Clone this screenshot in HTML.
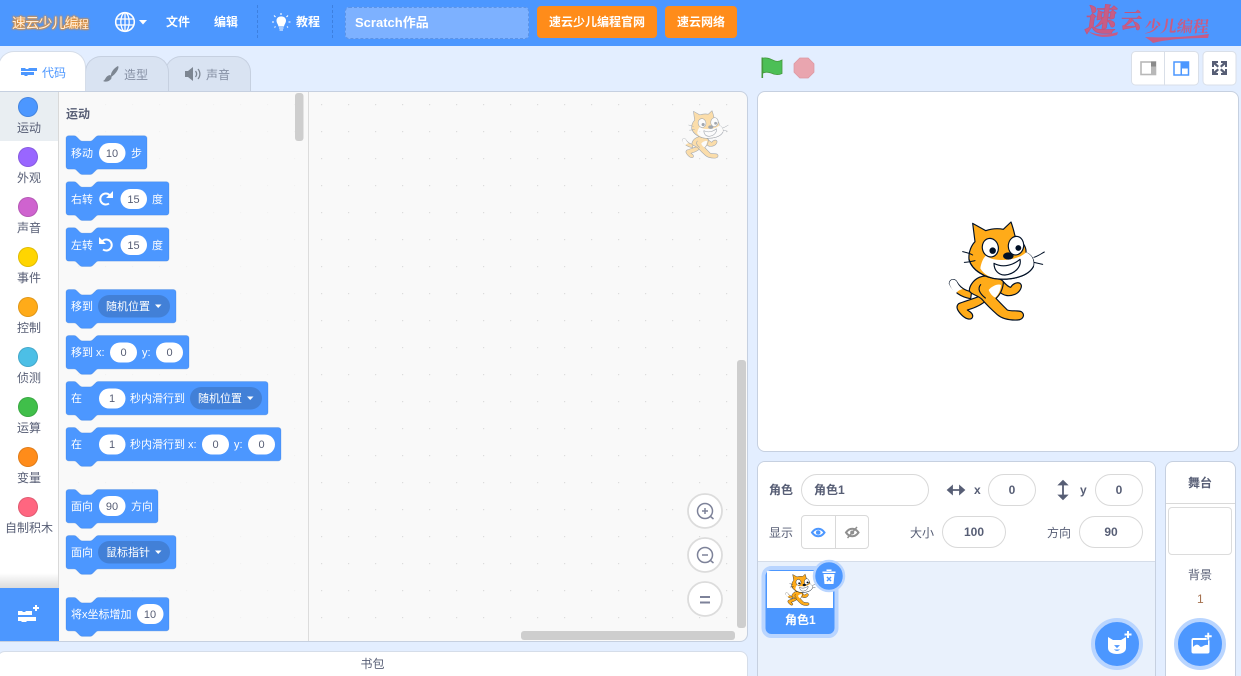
<!DOCTYPE html>
<html lang="zh"><head><meta charset="utf-8"><title>Scratch</title>
<style>
html,body{margin:0;padding:0;width:1241px;height:676px;overflow:hidden;background:#e3eeff;font-family:"Liberation Sans","Noto Sans CJK SC",sans-serif;}
#root{position:relative;width:1241px;height:676px;overflow:hidden}
.a{position:absolute;box-sizing:border-box}
.t{position:absolute;white-space:nowrap;line-height:16px}
.w{color:#fff;font-weight:700;font-size:12px}
.g{color:#575e75;font-size:12px}
.inp{position:absolute;box-sizing:border-box;background:#fff;border:1px solid #d9d9d9;border-radius:16px;color:#575e75;font-size:12px;font-weight:700;text-align:center;line-height:30px}
.cat{position:absolute;left:0;width:58px;text-align:center;font-size:12px;color:#575e75;line-height:16px}
.cat i{position:absolute;left:18px;top:-23px;width:20px;height:20px;border-radius:50%;box-sizing:border-box;border:1px solid rgba(0,0,0,.12)}
svg{position:absolute;overflow:visible}
text{font-family:"Liberation Sans","Noto Sans CJK SC",sans-serif}
</style></head><body><div id="root">
<svg width="0" height="0" style="left:0;top:0"><defs>
<symbol id="cat" viewBox="0 0 450 420">
<g stroke="#001026" stroke-width="3.5" stroke-linejoin="round" stroke-linecap="round">
<path d="M152 296C125 292 100 277 88 250C90 238 103 235 110 245C120 262 135 272 155 275Z" fill="#ffab19"/>
<path d="M88 250C90 238 103 235 110 245C115 255 120 262 128 267C118 270 112 274 108 280C98 272 92 262 88 250Z" fill="#fff" stroke="none"/>
<path d="M245 240C255 250 262 260 272 262C278 252 290 245 300 250C310 258 300 276 285 283C268 290 250 288 238 275Z" fill="#ffab19"/>
<path d="M175 290C155 298 130 305 116 311C106 320 112 332 126 346C138 358 155 362 158 350C160 340 148 334 142 330C160 325 185 315 200 300Z" fill="#ffab19"/>
<path d="M178 232C160 240 148 258 148 272C152 284 172 284 186 298C198 312 214 328 232 344C246 356 268 361 292 360C310 359 316 344 304 335C292 330 275 335 262 330C250 318 238 306 228 295C240 285 250 265 250 245C240 232 200 222 178 232Z" fill="#ffab19"/>
<path d="M206 270C215 258 235 250 243 255C242 270 235 285 226 293C218 290 210 280 206 270Z" fill="#fff" stroke="none"/>
<path d="M182 254C172 266 178 280 196 294" fill="none"/>
<path d="M158 70L197 92C215 86 235 85 250 88L273 66C278 80 282 95 285 108C305 120 320 140 318 158C335 165 345 180 340 200C325 228 280 240 235 237C195 235 155 210 147 178C145 155 155 135 165 125Z" fill="#ffab19"/>
<path d="M318 157C338 165 345 185 338 203C322 228 280 238 235 236C210 234 190 222 181 205C183 190 190 172 200 165C205 175 220 180 245 180C280 180 305 170 318 157Z" fill="#fff" stroke="none"/>
<path d="M340 200C325 228 280 240 235 237C195 235 155 210 147 178" fill="none"/>
<ellipse cx="211" cy="143" rx="24" ry="28" fill="#fff" transform="rotate(-12 211 143)"/>
<ellipse cx="288" cy="137" rx="23" ry="28" fill="#fff" transform="rotate(8 288 137)"/>
<circle cx="218" cy="152" r="8" fill="#001026"/><circle cx="295" cy="144" r="7" fill="#001026"/>
<ellipse cx="265" cy="168" rx="14" ry="9" fill="#001026"/>
<path d="M222 190C250 205 280 195 300 178C305 200 285 222 255 225C235 226 222 210 222 190Z" fill="#fff"/>
<path d="M128 155C140 158 150 160 158 165M133 187C145 187 155 184 165 182M342 172C355 168 365 160 373 156M342 187L368 193" fill="none" stroke-width="3"/>
</g></symbol>
<pattern id="dots" x="309" y="91" width="27" height="27" patternUnits="userSpaceOnUse"><rect x="12" y="13" width="1.2" height="1.2" fill="#dcdcdc"/></pattern>
<pattern id="dots2" x="309" y="91" width="27" height="27" patternUnits="userSpaceOnUse"><rect x="12" y="13" width="1.2" height="1.2" fill="#f2f2f2"/></pattern>
</defs></svg>

<!-- header -->
<div class="a" style="left:0;top:0;width:1241px;height:46px;background:#4c97ff"></div>
<div class="t" style="left:12px;top:14px;font-size:14px;line-height:18px;font-weight:400;color:#ffeeda;letter-spacing:-.8px;text-shadow:0 0 2px #ee8f25,0 0 2px #ee8f25,0 0 2px #ee8f25,0 0 1px #ee8f25">速云少儿编<span style="font-size:11px">程</span></div>
<svg style="left:0;top:0" width="400" height="46" fill="none" stroke="#fff">
<circle cx="125" cy="22" r="9.3" stroke-width="1.6"/><ellipse cx="125" cy="22" rx="4.2" ry="9.3" stroke-width="1.3"/><path d="M125 12.7V31.3M116 19H134M116 25H134" stroke-width="1.3"/>
<path d="M139 20H147L143 24.5Z" fill="#fff" stroke="none"/>
<path d="M257.500 5V39M332.500 5V39" stroke="#3d80e0" stroke-dasharray="3 2"/>
<path d="M276.500 20.500C276.500 15 286 15 286 20.500C286 23 284.500 24 284 26.500H278.500C278 24 276.500 23 276.500 20.500Z" fill="#fff" stroke="none"/>
<path d="M279 28H283.500M279.500 30H283M281 13V15M274 15.500L275.500 17M288 15.500L286.500 17M272 22H274M288.500 22H290.500M274.500 27.500L275.500 26.500M288 27.500L287 26.500" stroke-width="1.100"/>
</svg>
<div class="t w" style="left:166px;top:14px">文件</div>
<div class="t w" style="left:214px;top:14px">编辑</div>
<div class="t w" style="left:296px;top:14px">教程</div>
<div class="a" style="left:345px;top:7px;width:184px;height:32px;background:#7db1ff;border:1px dashed #5c93e6;border-radius:4px"></div>
<div class="t" style="left:355px;top:15px;color:#fff;font-weight:700;font-size:13px">Scratch作品</div>
<div class="a w" style="left:537px;top:6px;width:120px;height:32px;background:#ff8c1a;border-radius:4px;text-align:center;line-height:32px">速云少儿编程官网</div>
<div class="a w" style="left:665px;top:6px;width:72px;height:32px;background:#ff8c1a;border-radius:4px;text-align:center;line-height:32px">速云网络</div>
<div class="t" style="left:1086px;top:0;font:900 31px/36px 'Noto Serif CJK SC',serif;color:#c85c85;transform:skewX(-8deg);-webkit-text-stroke:.7px #c0557f">速</div>
<div class="t" style="left:1121px;top:5px;font:900 21px/30px 'Noto Serif CJK SC',serif;color:#c85c85;transform:skewX(-8deg);-webkit-text-stroke:.5px #c0557f">云</div>
<div class="t" style="left:1145px;top:16px;font:700 16px/20px 'Noto Serif CJK SC',serif;color:#c85c85;transform:skewX(-8deg)">少儿编程</div>
<svg style="left:0;top:0" width="1241" height="46"><path d="M1088 31C1098 36 1108 35 1118 32L1117 35C1107 38 1096 38 1088 31ZM1145 37C1165 38 1190 37 1209 34L1208 38C1190 38 1168 39 1153 43C1151 41 1148 39 1145 37Z" fill="#c85c85"/></svg>

<!-- tabs -->
<div class="a" style="left:165px;top:56px;width:86px;height:36px;background:#d9e3f2;border:1px solid #c6d0e0;border-bottom:0;border-radius:16px 16px 0 0"></div>
<div class="a" style="left:85px;top:56px;width:84px;height:36px;background:#d9e3f2;border:1px solid #c6d0e0;border-bottom:0;border-radius:16px 16px 0 0"></div>
<div class="a" style="left:-2px;top:51px;width:88px;height:41px;background:#fff;border:1px solid #d5dde9;border-bottom:0;border-radius:16px 16px 0 0"></div>
<svg style="left:0;top:0" width="260" height="92">
<path d="M21 68H25L26 69H28L29 68H37V71H21ZM21 72H34V75H28L27 76H25L24 75H21Z" fill="#4c97ff"/>
<path d="M118 66C120 68 115 75 111 77C110 73 114 68 118 66ZM110 75C112 76 112 79 110 80C108 82 105 82 103 81C106 80 105 76 110 75Z" fill="#7d8692"/>
<path d="M185 71H188L193 67V81L188 77H185Z" fill="#7d8692"/><path d="M195.500 71C197 73 197 75 195.500 77M198 69C200.500 72 200.500 76 198 79" stroke="#7d8692" stroke-width="1.300" fill="none"/>
</svg>
<div class="t" style="left:42px;top:65px;font-size:12px;color:#4c97ff">代码</div>
<div class="t" style="left:124px;top:67px;font-size:12px;color:#858fa3">造型</div>
<div class="t" style="left:206px;top:67px;font-size:12px;color:#858fa3">声音</div>

<!-- main panel -->
<div class="a" style="left:-3px;top:91px;width:751px;height:551px;background:#f9f9f9;border:1px solid #c6d0e0;border-radius:0 8px 8px 0;overflow:hidden">
<div class="a" style="left:2px;top:0;width:59px;height:496px;background:linear-gradient(#fff 0,#fff 481px,#dcdcdc 496px);border-right:1.500px solid #d9d9d9"></div>
<div class="a" style="left:2px;top:0;width:57.500px;height:49px;background:#e9eef2"></div>
<div class="a" style="left:2px;top:496px;width:59px;height:54px;background:#4c97ff"></div>
<div class="a" style="left:310px;top:0;width:1px;height:550px;background:#dcdcdc"></div>
</div>
<svg style="left:0;top:0" width="748" height="642">
<rect x="59.500" y="92" width="248" height="548" fill="url(#dots2)"/>
<rect x="310" y="92" width="437" height="548" rx="8" fill="url(#dots)"/>
<rect x="295" y="93" width="8.500" height="48" rx="3" fill="#cecece"/>
<rect x="737" y="360" width="9" height="268" rx="3" fill="#cecece"/>
<rect x="521" y="631" width="214" height="9" rx="3" fill="#cecece"/>
<g fill="#fff" stroke="#dcdcdc" stroke-width="1.800"><circle cx="705" cy="511" r="17"/><circle cx="705" cy="555" r="17"/><circle cx="705" cy="599" r="17"/></g>
<g fill="none" stroke="#7d8299" stroke-width="1.500"><circle cx="705" cy="511" r="7.500"/><path d="M710.500 516.500L713.500 519M702 511H708M705 508V514"/><circle cx="705" cy="555" r="7.500"/><path d="M710.500 560.500L713.500 563M702 555H708"/></g>
<path d="M700 596H710V598H700ZM700 601.500H710V603.500H700Z" fill="#7d8299"/>
<path d="M18 611H22L23 612H25L26 611H32V615H18ZM18 617H36V621H27L26 622H22L21 621H18Z" fill="#fff"/>
<path d="M35 605H37V607H39V609H37V611H35V609H33V607H35Z" fill="#fff"/>
</svg>
<svg style="left:668px;top:99.500px" width="72.600" height="67.800" opacity=".35"><use href="#cat" width="72.600" height="67.800"/></svg>

<div class="cat" style="top:120px"><i style="background:#4c97ff"></i>运动</div>
<div class="cat" style="top:170px"><i style="background:#9966ff"></i>外观</div>
<div class="cat" style="top:220px"><i style="background:#cf63cf"></i>声音</div>
<div class="cat" style="top:270px"><i style="background:#ffd500"></i>事件</div>
<div class="cat" style="top:320px"><i style="background:#ffab19"></i>控制</div>
<div class="cat" style="top:370px"><i style="background:#4cbfe6"></i>侦测</div>
<div class="cat" style="top:420px"><i style="background:#40bf4a"></i>运算</div>
<div class="cat" style="top:470px"><i style="background:#ff8c1a"></i>变量</div>
<div class="cat" style="top:520px"><i style="background:#ff6680"></i>自制积木</div>
<div class="t" style="left:66px;top:106px;font-size:12px;font-weight:700;color:#575e75">运动</div>

<!-- blocks -->
<svg style="left:0;top:0" width="300" height="642">
<g fill="#4c97ff" stroke="#3373cc" stroke-opacity=".3" stroke-width="1.200">
<path transform="translate(66 135.700) scale(.675)" d="m0 4A4 4 0 0 1 4 0H12c2 0 3 1 4 2l4 4c1 1 2 2 4 2h12c2 0 3-1 4-2l4-4c1-1 2-2 4-2H116a4 4 0 0 1 4 4v41.500a4 4 0 0 1-4 4H48c-2 0-3 1-4 2l-4 4c-1 1-2 2-4 2h-12c-2 0-3-1-4-2l-4-4c-1-1-2-2-4-2H4a4 4 0 0 1-4-4z"/>
<path transform="translate(66 181.700) scale(.675)" d="m0 4A4 4 0 0 1 4 0H12c2 0 3 1 4 2l4 4c1 1 2 2 4 2h12c2 0 3-1 4-2l4-4c1-1 2-2 4-2H148.600a4 4 0 0 1 4 4v41.500a4 4 0 0 1-4 4H48c-2 0-3 1-4 2l-4 4c-1 1-2 2-4 2h-12c-2 0-3-1-4-2l-4-4c-1-1-2-2-4-2H4a4 4 0 0 1-4-4z"/>
<path transform="translate(66 227.700) scale(.675)" d="m0 4A4 4 0 0 1 4 0H12c2 0 3 1 4 2l4 4c1 1 2 2 4 2h12c2 0 3-1 4-2l4-4c1-1 2-2 4-2H148.600a4 4 0 0 1 4 4v41.500a4 4 0 0 1-4 4H48c-2 0-3 1-4 2l-4 4c-1 1-2 2-4 2h-12c-2 0-3-1-4-2l-4-4c-1-1-2-2-4-2H4a4 4 0 0 1-4-4z"/>
<path transform="translate(66 289.500) scale(.675)" d="m0 4A4 4 0 0 1 4 0H12c2 0 3 1 4 2l4 4c1 1 2 2 4 2h12c2 0 3-1 4-2l4-4c1-1 2-2 4-2H159a4 4 0 0 1 4 4v41.500a4 4 0 0 1-4 4H48c-2 0-3 1-4 2l-4 4c-1 1-2 2-4 2h-12c-2 0-3-1-4-2l-4-4c-1-1-2-2-4-2H4a4 4 0 0 1-4-4z"/>
<path transform="translate(66 335.500) scale(.675)" d="m0 4A4 4 0 0 1 4 0H12c2 0 3 1 4 2l4 4c1 1 2 2 4 2h12c2 0 3-1 4-2l4-4c1-1 2-2 4-2H178.200a4 4 0 0 1 4 4v41.500a4 4 0 0 1-4 4H48c-2 0-3 1-4 2l-4 4c-1 1-2 2-4 2h-12c-2 0-3-1-4-2l-4-4c-1-1-2-2-4-2H4a4 4 0 0 1-4-4z"/>
<path transform="translate(66 381.500) scale(.675)" d="m0 4A4 4 0 0 1 4 0H12c2 0 3 1 4 2l4 4c1 1 2 2 4 2h12c2 0 3-1 4-2l4-4c1-1 2-2 4-2H295.300a4 4 0 0 1 4 4v41.500a4 4 0 0 1-4 4H48c-2 0-3 1-4 2l-4 4c-1 1-2 2-4 2h-12c-2 0-3-1-4-2l-4-4c-1-1-2-2-4-2H4a4 4 0 0 1-4-4z"/>
<path transform="translate(66 427.500) scale(.675)" d="m0 4A4 4 0 0 1 4 0H12c2 0 3 1 4 2l4 4c1 1 2 2 4 2h12c2 0 3-1 4-2l4-4c1-1 2-2 4-2H314.500a4 4 0 0 1 4 4v41.500a4 4 0 0 1-4 4H48c-2 0-3 1-4 2l-4 4c-1 1-2 2-4 2h-12c-2 0-3-1-4-2l-4-4c-1-1-2-2-4-2H4a4 4 0 0 1-4-4z"/>
<path transform="translate(66 489.500) scale(.675)" d="m0 4A4 4 0 0 1 4 0H12c2 0 3 1 4 2l4 4c1 1 2 2 4 2h12c2 0 3-1 4-2l4-4c1-1 2-2 4-2H132.300a4 4 0 0 1 4 4v41.500a4 4 0 0 1-4 4H48c-2 0-3 1-4 2l-4 4c-1 1-2 2-4 2h-12c-2 0-3-1-4-2l-4-4c-1-1-2-2-4-2H4a4 4 0 0 1-4-4z"/>
<path transform="translate(66 535.500) scale(.675)" d="m0 4A4 4 0 0 1 4 0H12c2 0 3 1 4 2l4 4c1 1 2 2 4 2h12c2 0 3-1 4-2l4-4c1-1 2-2 4-2H159a4 4 0 0 1 4 4v41.500a4 4 0 0 1-4 4H48c-2 0-3 1-4 2l-4 4c-1 1-2 2-4 2h-12c-2 0-3-1-4-2l-4-4c-1-1-2-2-4-2H4a4 4 0 0 1-4-4z"/>
<path transform="translate(66 597.500) scale(.675)" d="m0 4A4 4 0 0 1 4 0H12c2 0 3 1 4 2l4 4c1 1 2 2 4 2h12c2 0 3-1 4-2l4-4c1-1 2-2 4-2H148.600a4 4 0 0 1 4 4v41.500a4 4 0 0 1-4 4H48c-2 0-3 1-4 2l-4 4c-1 1-2 2-4 2h-12c-2 0-3-1-4-2l-4-4c-1-1-2-2-4-2H4a4 4 0 0 1-4-4z"/>
</g>
<g fill="#fff">
<rect x="99" y="143" width="26.500" height="20" rx="10"/>
<rect x="120.500" y="189" width="26.500" height="20" rx="10"/>
<rect x="120.500" y="235" width="26.500" height="20" rx="10"/>
<rect x="110" y="342.500" width="27" height="20" rx="10"/><rect x="156" y="342.500" width="27" height="20" rx="10"/>
<rect x="99" y="388.500" width="26.500" height="20" rx="10"/>
<rect x="99" y="434.500" width="26.500" height="20" rx="10"/><rect x="202" y="434.500" width="27" height="20" rx="10"/><rect x="248" y="434.500" width="27" height="20" rx="10"/>
<rect x="99" y="496" width="26.500" height="20" rx="10"/>
<rect x="137" y="604" width="26.500" height="20" rx="10"/>
</g>
<g fill="#4280d7"><rect x="98" y="295" width="72" height="22.500" rx="11.200"/><rect x="190" y="387" width="72" height="22.500" rx="11.200"/><rect x="98" y="541" width="72" height="22.500" rx="11.200"/></g>
<g fill="#fff"><path d="M155 304.500H161.500L158.200 308ZM247 396.500H253.500L250.200 400ZM155 550.500H161.500L158.200 554Z"/></g>
<g fill="none" stroke="#fff" stroke-width="2"><path d="M109 203.500A5.500 5.500 0 1 1 109.500 195"/><path d="M103 249.500A5.500 5.500 0 1 0 102.500 241"/></g>
<path d="M113 191V198H106ZM99 237V244H106Z" fill="#fff"/>
<g font-size="11" fill="#fff">
<text x="71" y="157">移动</text><text x="131" y="157">步</text>
<text x="71" y="203">右转</text><text x="152" y="203">度</text>
<text x="71" y="249">左转</text><text x="152" y="249">度</text>
<text x="71" y="310">移到</text><text x="106" y="310">随机位置</text>
<text x="71" y="356">移到 x:</text><text x="142" y="356">y:</text>
<text x="71" y="402">在</text><text x="130" y="402">秒内滑行到</text><text x="198" y="402">随机位置</text>
<text x="71" y="448">在</text><text x="130" y="448">秒内滑行到 x:</text><text x="234" y="448">y:</text>
<text x="71" y="510">面向</text><text x="131" y="510">方向</text>
<text x="71" y="556">面向</text><text x="106" y="556">鼠标指针</text>
<text x="71" y="618">将x坐标增加</text>
</g>
<g font-size="11" fill="#575e75" text-anchor="middle">
<text x="112" y="157">10</text><text x="133.500" y="203">15</text><text x="133.500" y="249">15</text>
<text x="123.500" y="356">0</text><text x="169.500" y="356">0</text>
<text x="112" y="402">1</text><text x="112" y="448">1</text><text x="215.500" y="448">0</text><text x="261.500" y="448">0</text>
<text x="112" y="510">90</text><text x="150" y="618">10</text>
</g>
</svg>

<!-- backpack -->
<div class="a" style="left:-3px;top:651px;width:751px;height:32px;background:#fff;border:1px solid #d5dde9;border-radius:8px;text-align:center;font-size:12px;color:#575e75;line-height:24px">书包</div>

<!-- stage header -->
<svg style="left:0;top:0" width="1241" height="92">
<path d="M762 58.500C767 56.500 772 60 775 61C777.500 61.800 780 61.200 782 60V73.500C778 75.500 774 74.500 771 73C768 72 765 72 763 73Z" fill="#4cbf56" stroke="#45993d" stroke-width=".8"/>
<rect x="761.500" y="57.500" width="1.600" height="20.500" fill="#45993d"/>
<path d="M799.800 58H808.200L814 63.800V72.200L808.200 78H799.800L794 72.200V63.800Z" fill="#e9a5af" stroke="#dc97a2" stroke-width=".7"/>
<rect x="1131.500" y="51.500" width="67" height="33.500" rx="4" fill="#fff" stroke="#d9dfe8"/>
<path d="M1164.500 52V85" stroke="#d9dfe8"/>
<rect x="1203" y="51.500" width="33" height="33.500" rx="4" fill="#fff" stroke="#d9dfe8"/>
<rect x="1141" y="62" width="14.500" height="12.500" fill="none" stroke="#b8b8b8" stroke-width="1.600"/><rect x="1151" y="62" width="4" height="12.500" fill="#b8b8b8"/><rect x="1151" y="61.500" width="5" height="5" fill="#8a8a8a"/>
<rect x="1174" y="62" width="14.500" height="13" fill="#fff" stroke="#4c97ff" stroke-width="1.500"/><rect x="1181" y="61.500" width="8" height="7" fill="#4c97ff"/><rect x="1180.500" y="62" width="1.500" height="13" fill="#4c97ff"/>
<g fill="#575e75"><path d="M1212 61H1218V63H1216L1219 66L1217.500 67.500L1214 64.500V67H1212ZM1227 61H1221V63H1223L1220 66L1221.500 67.500L1225 64.500V67H1227ZM1212 75H1218V73H1216L1219 70L1217.500 68.500L1214 71.500V69H1212ZM1227 75H1221V73H1223L1220 70L1221.500 68.500L1225 71.500V69H1227Z"/></g>
</svg>
<div class="a" style="left:756.500px;top:91px;width:482px;height:361px;background:#fff;border:1px solid #c6d0e0;border-radius:8px"></div>
<svg style="left:920px;top:200px" width="150" height="140"><use href="#cat" width="150" height="140"/></svg>

<!-- sprite panel -->
<div class="a" style="left:756.500px;top:460.500px;width:399px;height:220px;background:#e9f1fc;border:1px solid #c6d0e0;border-radius:8px 8px 0 0;overflow:hidden"><div class="a" style="left:0;top:0;width:100%;height:100.500px;background:#fff;border-bottom:1px solid #d5dde9"></div></div>
<div class="t g" style="left:769px;top:482px;font-weight:700">角色</div>
<div class="inp" style="left:801px;top:474px;width:128px;height:32px;text-align:left;padding-left:12px">角色1</div>
<div class="t g" style="left:974px;top:482px;font-weight:700">x</div>
<div class="inp" style="left:988px;top:474px;width:48px;height:32px">0</div>
<div class="t g" style="left:1080px;top:482px;font-weight:700">y</div>
<div class="inp" style="left:1095px;top:474px;width:48px;height:32px">0</div>
<div class="t g" style="left:769px;top:525px">显示</div>
<div class="a" style="left:801px;top:515px;width:68px;height:34px;background:#fff;border:1px solid #d9d9d9;border-radius:4px"><div class="a" style="left:33px;top:0;width:1px;height:32px;background:#d9d9d9"></div></div>
<div class="t g" style="left:910px;top:525px">大小</div>
<div class="inp" style="left:942px;top:516px;width:64px;height:32px">100</div>
<div class="t g" style="left:1047px;top:525px">方向</div>
<div class="inp" style="left:1079px;top:516px;width:64px;height:32px">90</div>
<svg style="left:0;top:0" width="1241" height="676">
<path d="M949 490H963M952 486.500L948 490L952 493.500ZM960 486.500L964 490L960 493.500Z" fill="#575e75" stroke="#575e75" stroke-width="1.800"/>
<path d="M1063 484V496M1059.500 484.500L1063 481L1066.500 484.500ZM1059.500 495.500L1063 499L1066.500 495.500Z" fill="#575e75" stroke="#575e75" stroke-width="1.800"/>
<path d="M812 532.500C815.500 527.500 821 527.500 824.500 532.500C821 537.500 815.500 537.500 812 532.500Z" fill="#fff" stroke="#4c97ff" stroke-width="2"/><circle cx="818.200" cy="532.500" r="2.300" fill="#4c97ff"/>
<path d="M846 532.500C849.500 527.500 855 527.500 858.500 532.500C855 537.500 849.500 537.500 846 532.500Z" fill="none" stroke="#8f8f8f" stroke-width="2"/><circle cx="852.200" cy="532.500" r="2" fill="#8f8f8f"/><path d="M847.500 538L857 527" stroke="#8f8f8f" stroke-width="1.500"/>
<!-- sprite tile -->
<rect x="763.500" y="568" width="73" height="68" rx="8" fill="#4c97ff" stroke="#b9d5ff" stroke-width="4"/>
<rect x="767" y="571" width="66" height="37" fill="#fff"/>
</svg>
<svg style="left:775.600px;top:567px" width="48" height="45"><use href="#cat" width="48" height="45"/></svg>
<svg style="left:0;top:0" width="1241" height="676">
<circle cx="829" cy="576" r="15" fill="#4c97ff" stroke="#b9d5ff" stroke-width="2.500"/>
<path d="M822.500 571.500H835.500V573H822.500ZM826.500 571V569.500H831.500V571ZM823.500 574H834.500L833.500 584H824.500Z" fill="#fff"/>
<path d="M827 577L831 581M831 577L827 581" stroke="#4c97ff" stroke-width="1.500"/>
<!-- add sprite -->
<circle cx="1117" cy="644" r="24" fill="#4c97ff" stroke="#b9d5ff" stroke-width="4"/>
<path d="M1108 637L1113 640H1121L1126 637V648C1126 652 1122 654 1117 654C1112 654 1108 652 1108 648Z" fill="#fff"/>
<path d="M1115 645.500H1119L1117 647.500ZM1114.500 649.500C1116 650.800 1118 650.800 1119.500 649.500" fill="#4c97ff" stroke="#4c97ff" stroke-width=".8"/>
<path d="M1127 631H1129V633.500H1131.500V635.500H1129V638H1127V635.500H1124.500V633.500H1127Z" fill="#fff"/>
</svg>
<div class="a" style="left:1164.500px;top:460.500px;width:71px;height:220px;background:#fff;border:1px solid #c6d0e0;border-radius:8px 8px 0 0"><div class="a" style="left:0;top:41px;width:69px;height:1px;background:#d9d9d9"></div></div>
<div class="t g" style="left:1188px;top:475px;font-weight:700;font-size:12px">舞台</div>
<div class="a" style="left:1168px;top:507px;width:64px;height:48px;background:#fff;border:1.500px solid #dcdcdc;border-radius:4px"></div>
<div class="t g" style="left:1188px;top:567px">背景</div>
<div class="t" style="left:1197px;top:591px;font-size:12px;color:#a5714e">1</div>
<svg style="left:0;top:0" width="1241" height="676">
<circle cx="1200" cy="644" r="24" fill="#4c97ff" stroke="#b9d5ff" stroke-width="4"/>
<rect x="1191.500" y="638" width="18" height="15.500" rx="2" fill="#fff"/>
<path d="M1193 647C1196 644 1198 644 1200 646.500C1202 648 1204 644 1208 645V640H1193Z" fill="#4c97ff"/>
<path d="M1207 632.500H1209.500V635H1212V637.500H1209.500V640H1207V637.500H1204.500V635H1207Z" fill="#fff" stroke="#4c97ff" stroke-width=".6"/>
</svg>
<div class="t" style="left:785px;top:612px;font-size:12px;font-weight:700;color:#fff">角色1</div>
</div></body></html>
